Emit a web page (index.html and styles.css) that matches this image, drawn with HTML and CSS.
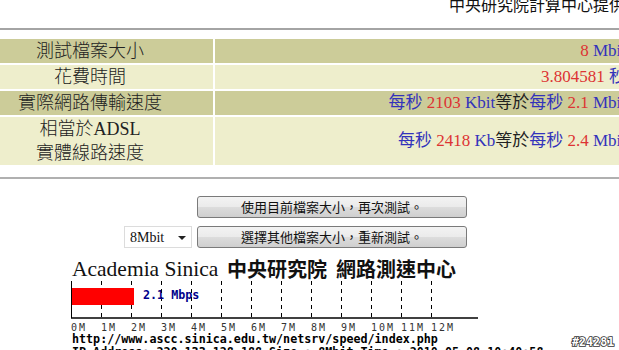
FILE: index.html
```html
<!DOCTYPE html>
<html lang="zh-Hant">
<head>
    <meta charset="UTF-8">
    <title>網路測速結果</title>
    <link rel="stylesheet" href="styles.css">
</head>
<body>
    <div class="credit">中央研究院計算中心提供</div>
    <div class="rule"></div>

    <table class="result">
        <tr class="dark">
            <td class="label">測試檔案大小</td>
            <td class="value"><span class="num">8</span> <span class="unit">Mbit</span></td>
        </tr>
        <tr class="light">
            <td class="label">花費時間</td>
            <td class="value"><span class="num">3.804581</span> <span class="unit">秒</span></td>
        </tr>
        <tr class="dark">
            <td class="label">實際網路傳輸速度</td>
            <td class="value"><span class="unit">每秒</span> <span class="num">2103</span> <span class="unit">Kbit</span>等於<span class="unit">每秒</span> <span class="num">2.1</span> <span class="unit">Mbit</span></td>
        </tr>
        <tr class="light">
            <td class="label">相當於ADSL<br>實體線路速度</td>
            <td class="value"><span class="unit">每秒</span> <span class="num">2418</span> <span class="unit">Kb</span>等於<span class="unit">每秒</span> <span class="num">2.4</span> <span class="unit">Mbit</span></td>
        </tr>
    </table>

    <div class="rule rule-bottom"></div>

    <form class="controls">
        <div class="row row-again">
            <button type="button" class="btn">使用目前檔案大小，再次測試。</button>
        </div>
        <div class="row row-new">
            <span class="pick">
                <select class="size">
                    <option>8Mbit</option>
                    <option>16Mbit</option>
                    <option>32Mbit</option>
                </select>
            </span>
            <button type="button" class="btn">選擇其他檔案大小，重新測試。</button>
        </div>
    </form>

    <svg class="chart" width="619" height="110" viewBox="0 0 619 110">
        <text x="72" y="23" class="t-en">Academia Sinica</text>
        <text x="227" y="24" class="t-zh">中央研究院</text>
        <text x="336" y="24" class="t-zh">網路測速中心</text>

        <g class="grid">
            <line x1="101.5" y1="28" x2="101.5" y2="64"/>
            <line x1="131.5" y1="28" x2="131.5" y2="64"/>
            <line x1="161.5" y1="28" x2="161.5" y2="64"/>
            <line x1="191.5" y1="28" x2="191.5" y2="64"/>
            <line x1="221.5" y1="28" x2="221.5" y2="64"/>
            <line x1="251.5" y1="28" x2="251.5" y2="64"/>
            <line x1="281.5" y1="28" x2="281.5" y2="64"/>
            <line x1="311.5" y1="28" x2="311.5" y2="64"/>
            <line x1="341.5" y1="28" x2="341.5" y2="64"/>
            <line x1="371.5" y1="28" x2="371.5" y2="64"/>
            <line x1="401.5" y1="28" x2="401.5" y2="64"/>
            <line x1="431.5" y1="28" x2="431.5" y2="64"/>
        </g>

        <rect x="71" y="35" width="63" height="17" fill="#ff0000"/>
        <line x1="71.5" y1="28" x2="71.5" y2="65" stroke="#000"/>
        <line x1="71" y1="65" x2="478" y2="65" stroke="#000" stroke-width="1.5"/>

        <text x="143" y="46" class="speed">2.1 Mbps</text>

        <g class="ticks">
            <text x="71" y="78">0M</text>
            <text x="101" y="78">1M</text>
            <text x="131" y="78">2M</text>
            <text x="161" y="78">3M</text>
            <text x="191" y="78">4M</text>
            <text x="221" y="78">5M</text>
            <text x="251" y="78">6M</text>
            <text x="281" y="78">7M</text>
            <text x="311" y="78">8M</text>
            <text x="341" y="78">9M</text>
            <text x="371" y="78">10M</text>
            <text x="401" y="78">11M</text>
            <text x="431" y="78">12M</text>
        </g>

        <text x="72" y="90" class="info">http://www.ascc.sinica.edu.tw/netsrv/speed/index.php</text>
        <text x="72" y="103" class="info">IP Address: 220.133.128.188 Size : 8Mbit Time : 2010-05-08 10:40:58</text>

        <text x="572" y="93" class="count">#24281</text>
    </svg>
</body>
</html>
```

FILE: styles.css
```css
html, body {
    overflow: hidden;
}

body {
    margin: 0;
    font-family: "Liberation Serif", "Noto Sans CJK TC", serif;
    color: #222;
}

.credit {
    margin-top: -4px;
    padding-left: 449px;
    height: 16px;
    font-family: "Noto Sans CJK TC", sans-serif;
    font-size: 16px;
    line-height: 16px;
    white-space: nowrap;
    color: #111;
}

.rule {
    margin-top: 16px;
    border-top: 2px solid #a4a4a4;
}

.rule-bottom {
    margin-top: 10px;
    border-top-color: #b0b0b0;
}

.result {
    margin: 7px 0 0 -2px;
    width: 630px;
    border-spacing: 2px;
    white-space: nowrap;
}

.result td {
    padding: 0;
    line-height: 24px;
    vertical-align: middle;
}

.dark td {
    background: #cccc99;
}

.light td {
    background: #eeeecc;
}

.label {
    width: 180px;
    padding-right: 33px !important;
    text-align: center;
    font-size: 18px;
    font-weight: 300;
}

.value {
    text-align: right;
    padding-right: 0 !important;
    font-size: 17px;
}

.num {
    color: #dd3333;
}

.unit {
    color: #3333bb;
}

.controls {
    margin: 17px 0 0;
}

.row {
    display: flex;
    align-items: center;
}

.row-again {
    padding-left: 197px;
}

.row-new {
    margin-top: 8px;
    padding-left: 124px;
    gap: 5px;
}

.btn {
    width: 270px;
    height: 22px;
    padding: 0;
    border: 1px solid #7a7a7a;
    border-radius: 3px;
    background: linear-gradient(#f3f3f3, #ebebeb 48%, #dcdcdc 52%, #cfcfcf);
    font-family: "Noto Sans CJK TC", sans-serif;
    font-size: 13px;
    line-height: 18px;
    color: #111;
}

.pick {
    position: relative;
    display: block;
}

.size {
    appearance: none;
    display: block;
    width: 68px;
    height: 22px;
    margin: 0;
    padding: 0 0 0 5px;
    border: 1px solid #dcdcdc;
    border-radius: 0;
    background: #fff;
    font-family: "Liberation Serif", serif;
    font-size: 14px;
    color: #111;
}

.pick::after {
    content: "";
    position: absolute;
    right: 6px;
    top: 10px;
    border-left: 4px solid transparent;
    border-right: 4px solid transparent;
    border-top: 4px solid #222;
    pointer-events: none;
}

.chart {
    display: block;
    margin-top: 5px;
}

.t-en {
    font-family: "Liberation Serif", serif;
    font-size: 21.5px;
    fill: #111;
}

.t-zh {
    font-family: "Noto Sans CJK TC", sans-serif;
    font-size: 20px;
    font-weight: 700;
    fill: #111;
}

.grid line {
    stroke: #000;
    stroke-dasharray: 4 4;
}

.speed {
    font-family: "DejaVu Sans Mono", monospace;
    font-size: 11.7px;
    font-weight: 700;
    fill: #00008b;
}

.ticks text {
    font-family: "DejaVu Sans Mono", monospace;
    font-size: 10px;
    letter-spacing: 2px;
    fill: #333;
}

.info {
    font-family: "DejaVu Sans Mono", monospace;
    font-size: 11.7px;
    font-weight: 700;
    fill: #000;
}

.count {
    font-family: "DejaVu Sans Mono", monospace;
    font-size: 11.7px;
    font-weight: 700;
    fill: #fff;
    stroke: #333;
    stroke-width: 1.6px;
    paint-order: stroke;
}
```
